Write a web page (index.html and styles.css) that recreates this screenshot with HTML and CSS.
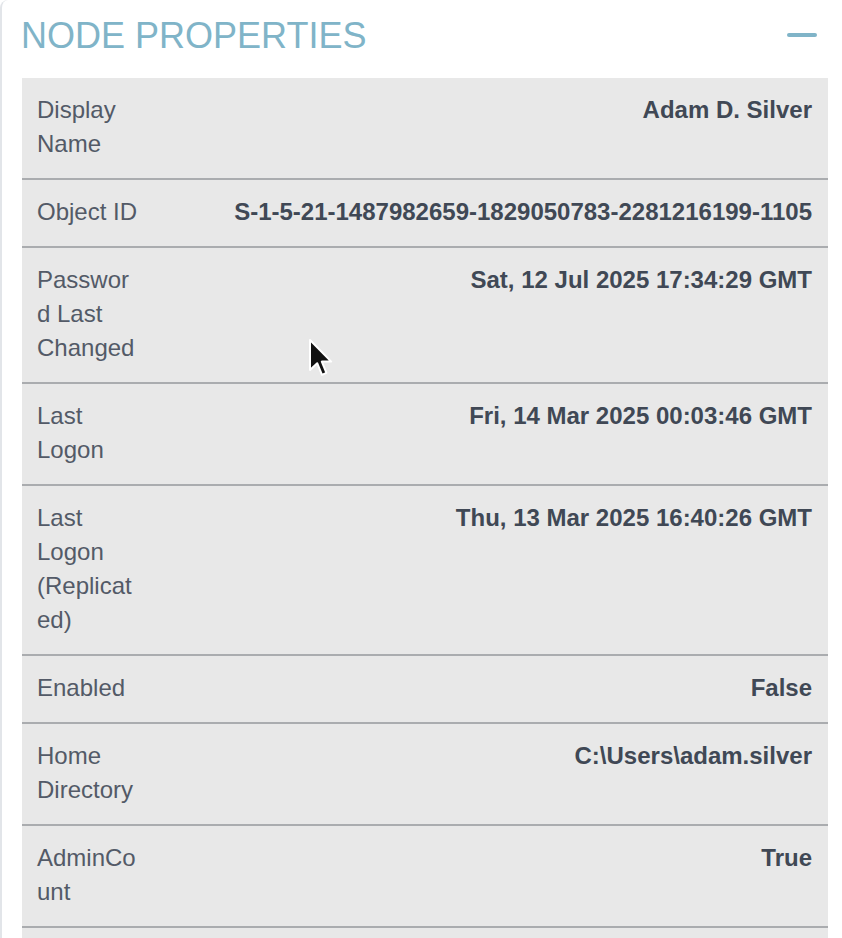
FILE: index.html
```html
<!DOCTYPE html>
<html lang="en">
<head>
<meta charset="utf-8">
<title>Node Properties</title>
<link rel="stylesheet" href="styles.css">
</head>
<body>
<section class="panel">
  <header class="panel-header">
    <h2 class="panel-title">NODE PROPERTIES</h2>
    <span class="collapse-icon" aria-label="Collapse"></span>
  </header>
  <div class="props">
    <div class="row"><div class="label">Display Name</div><div class="value">Adam D. Silver</div></div>
    <div class="row"><div class="label">Object ID</div><div class="value">S-1-5-21-1487982659-1829050783-2281216199-1105</div></div>
    <div class="row"><div class="label">Password Last Changed</div><div class="value">Sat, 12 Jul 2025 17:34:29 GMT</div></div>
    <div class="row"><div class="label">Last Logon</div><div class="value">Fri, 14 Mar 2025 00:03:46 GMT</div></div>
    <div class="row"><div class="label">Last Logon (Replicated)</div><div class="value">Thu, 13 Mar 2025 16:40:26 GMT</div></div>
    <div class="row"><div class="label">Enabled</div><div class="value">False</div></div>
    <div class="row"><div class="label">Home Directory</div><div class="value">C:\Users\adam.silver</div></div>
    <div class="row"><div class="label">AdminCount</div><div class="value">True</div></div>
    <div class="row"><div class="label"></div><div class="value"></div></div>
  </div>
</section>
<svg class="cursor" width="26" height="40" viewBox="0 0 13 20" aria-hidden="true">
  <path d="M1 1 L1 16 L4.6 12.6 L7 18.4 L9.2 17.4 L6.9 11.8 L11.6 11.8 Z" fill="#111" stroke="#fff" stroke-width="1" stroke-linejoin="round"/>
</svg>
</body>
</html>
```

FILE: styles.css
```css
html, body {
  margin: 0;
  padding: 0;
  background: #ffffff;
  font-family: "Liberation Sans", Arial, Helvetica, sans-serif;
}

body {
  position: relative;
  height: 938px;
  overflow: hidden;
}

.panel {
  border-left: 2px solid #e2e5e9;
  border-top-left-radius: 8px;
  padding: 16px 14px 0 20px;
  min-height: 938px;
  box-sizing: border-box;
}

.panel-header {
  display: flex;
  align-items: center;
  justify-content: space-between;
  height: 40px;
  margin-bottom: 22px;
}

.panel-title {
  margin: 0 0 0 -1px;
  font-size: 36px;
  line-height: 40px;
  font-weight: 400;
  color: #80b4c8;
  letter-spacing: 0;
}

.collapse-icon {
  display: block;
  width: 30px;
  height: 4px;
  border-radius: 2px;
  background: #80b4c8;
  margin-right: 11px;
  margin-top: -2px;
}

.props {
  background: #e8e8e8;
}

.row {
  display: grid;
  grid-template-columns: 134px 1fr;
  border-bottom: 2px solid #aaacaf;
}

.label,
.value {
  padding: 15px 16px 17px;
  font-size: 24px;
  line-height: 34px;
  min-height: 34px;
}

.label {
  padding-left: 15px;
  color: #535a67;
  overflow-wrap: break-word;
  word-wrap: break-word;
  min-width: 0;
}

.value {
  text-align: right;
  font-weight: 700;
  color: #404855;
  white-space: nowrap;
}

.cursor {
  position: absolute;
  left: 308px;
  top: 338px;
}
```
